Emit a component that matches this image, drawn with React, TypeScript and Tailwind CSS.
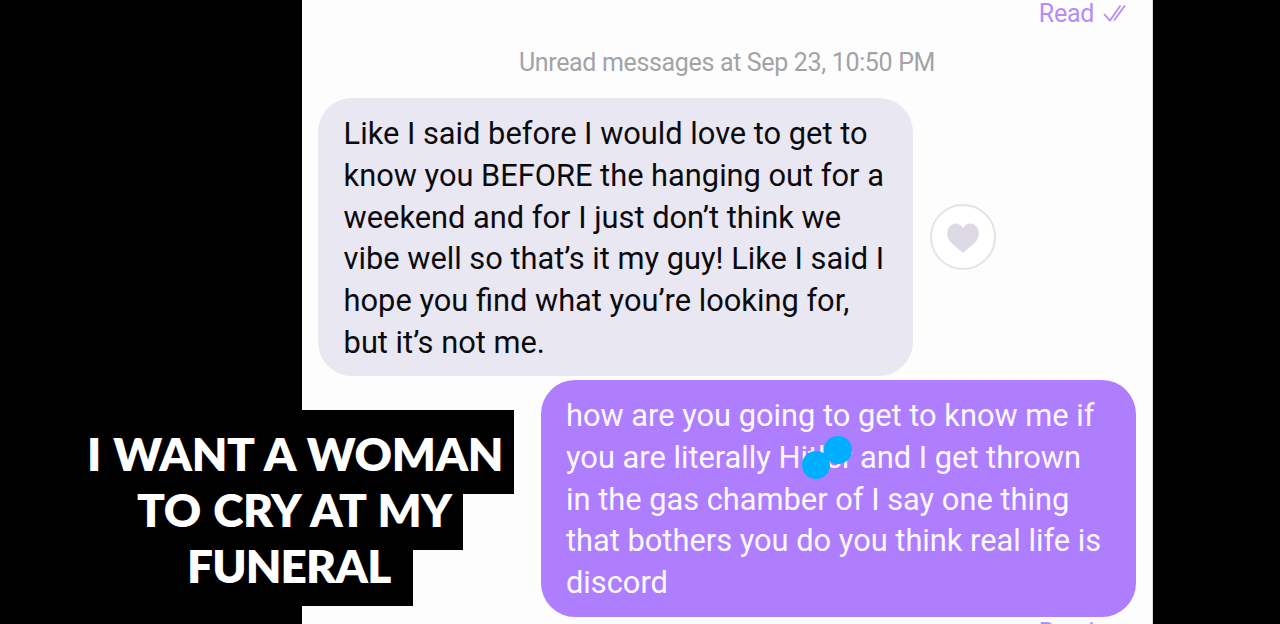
const received = [
  "Like I said before I would love to get to",
  "know you BEFORE the hanging out for a",
  "weekend and for I just don’t think we",
  "vibe well so that’s it my guy! Like I said I",
  "hope you find what you’re looking for,",
  "but it’s not me.",
];

const sent = [
  "how are you going to get to know me if",
  "you are literally Hitler and I get thrown",
  "in the gas chamber of I say one thing",
  "that bothers you do you think real life is",
  "discord",
];

function Receipt() {
  return (
    <div className="flex items-center gap-[9px] h-8 pr-[26px] self-end text-[25px] text-[#b48cfb] leading-8">
      <span className="tracking-[-0.3px]">Read</span>
      <svg width="23" height="18" viewBox="0 0 23 18" fill="none" stroke="currentColor" strokeWidth="1.8">
        <path d="M1 9 L7 15.5 L17.5 0.5 M11 15.5 L22 0.5" />
      </svg>
    </div>
  );
}

function Message({ lines }: { lines: string[] }) {
  return (
    <>
      {lines.map((line) => (
        <p key={line} className="whitespace-nowrap leading-[41.8px]">
          {line}
        </p>
      ))}
    </>
  );
}

function Caption() {
  return (
    <div className="absolute left-0 top-[410px] flex flex-col items-start font-['Lato',sans-serif] font-extrabold text-[46px] text-white whitespace-nowrap tracking-[-0.4px] [word-spacing:2px]">
      <div className="bg-black w-[514px] h-[84px] pl-[87px] pt-[16px] leading-[56px]">I WANT A WOMAN</div>
      <div className="bg-black w-[463px] h-[56px] pl-[137px] leading-[32px]">TO CRY AT MY</div>
      <div className="bg-black w-[413px] h-[56px] pl-[187px] leading-[32px] tracking-[-0.9px]">FUNERAL</div>
    </div>
  );
}

function App() {
  return (
    <main className="relative w-[1280px] h-[624px] overflow-hidden bg-black font-['Roboto',sans-serif]">
      <section className="flex flex-col w-[851px] h-[624px] ml-[302px] bg-[#fdfdfe] border-r border-[#dcdce0] overflow-hidden">
        <div className="flex flex-col h-[30px] justify-end">
          <Receipt />
        </div>
        <p className="mt-[17px] h-8 leading-8 text-center text-[25px] tracking-[-0.34px] text-[#a3a3a5] whitespace-nowrap">
          Unread messages at Sep 23, 10:50 PM
        </p>
        <div className="flex items-center gap-[17px] mt-[19px] ml-4">
          <div className="w-[595px] h-[278px] shrink-0 rounded-[34px] bg-[#e9e7f1] pl-[25.6px] pt-[15px] text-[30.8px] text-[#0b0b0f]">
            <Message lines={received} />
          </div>
          <button className="flex items-center justify-center size-[66px] rounded-full bg-white border-2 border-[#e4e3e8] text-[#dddae6]">
            <svg width="32" height="30" viewBox="0 0 32 30" fill="currentColor" className="mt-0.5">
              <path d="M16 30 C13 27 5 21.5 2 17 C-0.5 13 -0.5 6 3 3 C7 -1 13 0 16 5 C19 0 25 -1 29 3 C32.5 6 32.5 13 30 17 C27 21.5 19 27 16 30 Z" />
            </svg>
          </button>
        </div>
        <div className="relative w-[595px] h-[237px] shrink-0 mt-[4px] ml-[239px] rounded-[34px] bg-[#af7eff] pl-[25px] pt-[15px] text-[30.8px] text-[#fcf8ff]">
          <Message lines={sent} />
          <span className="absolute left-[261px] top-[71px] size-[28px] rounded-full bg-[#00aeff]" />
          <span className="absolute left-[283px] top-[56px] size-[28px] rounded-full bg-[#00aeff]" />
        </div>
        <div className="flex flex-col">
          <Receipt />
        </div>
      </section>
      <Caption />
    </main>
  );
}

export default App;
